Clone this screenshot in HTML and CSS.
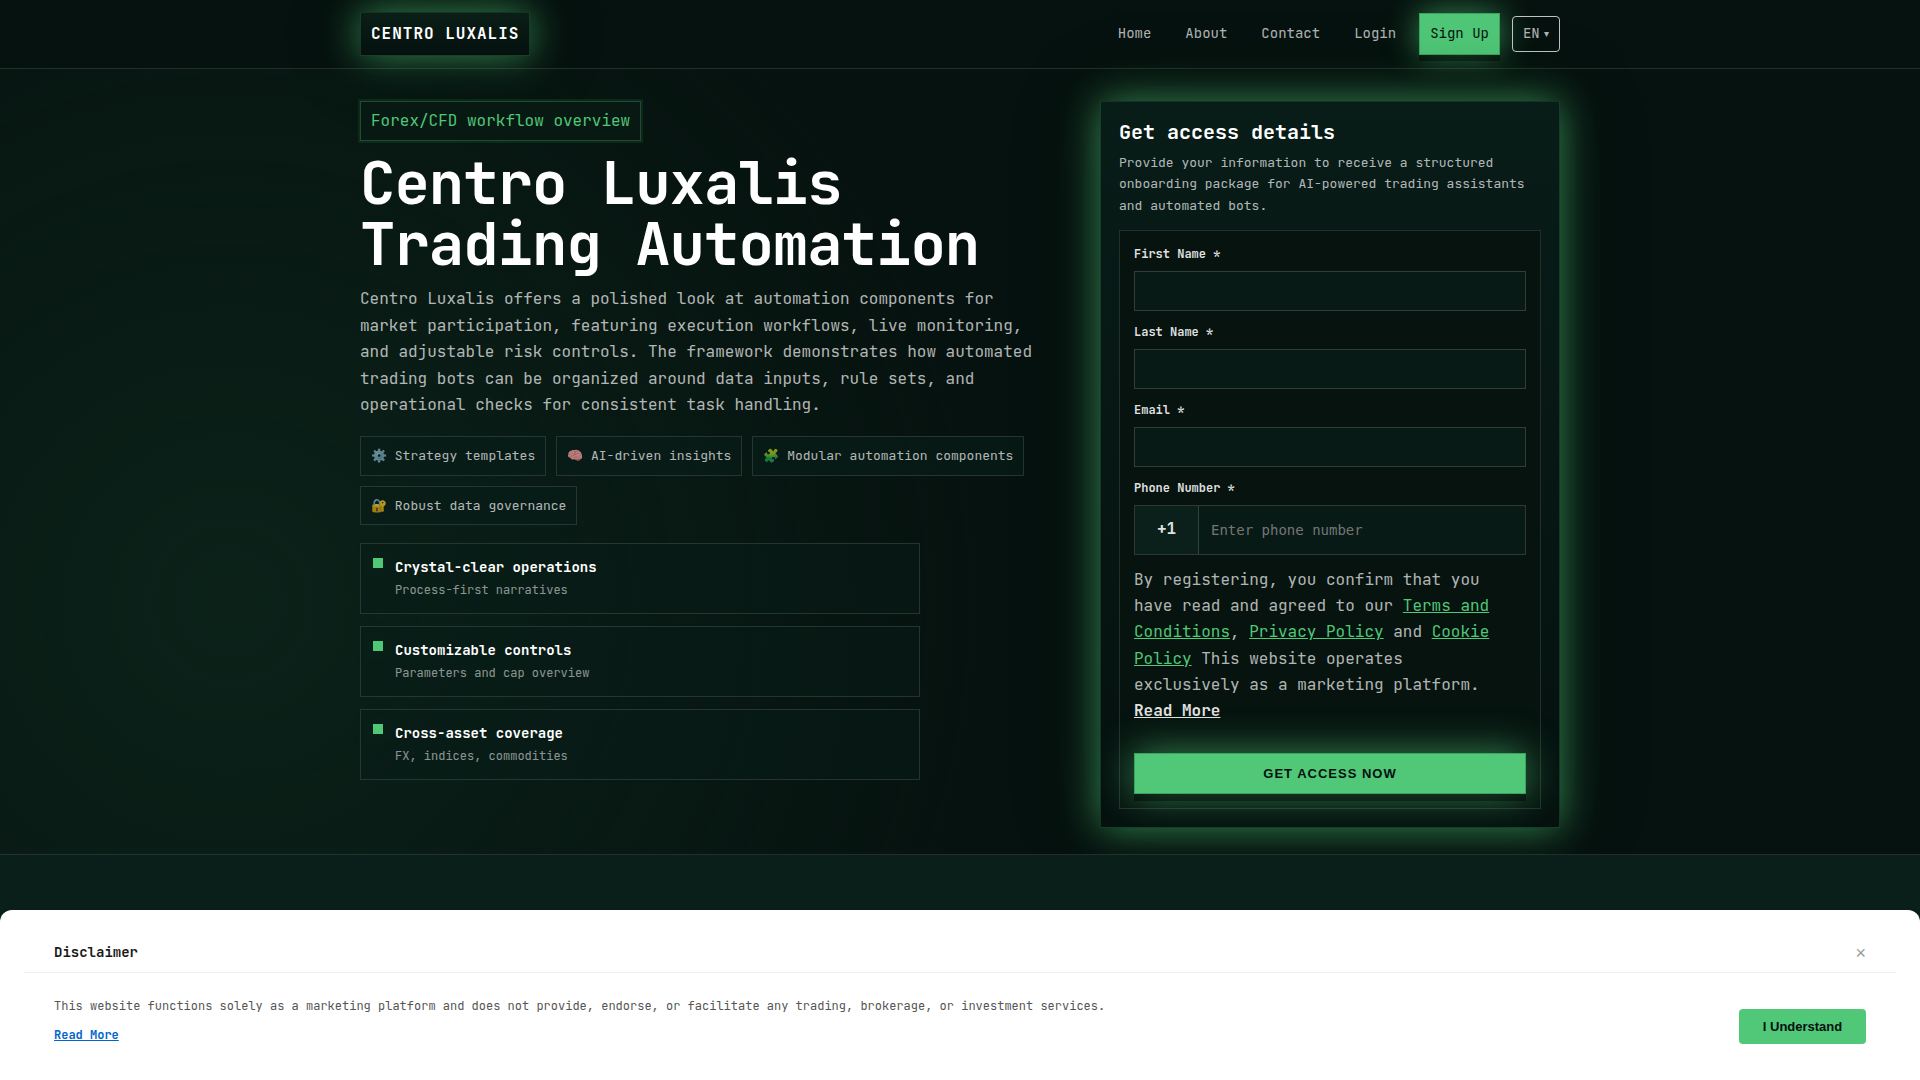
FILE: index.html
```
<!DOCTYPE html>
<html lang="en">
<head>
    <meta charset="UTF-8">
    <meta name="viewport" content="width=device-width, initial-scale=1.0">
    <title>Centro Luxalis</title>
    <link rel="stylesheet" href="styles.css">
</head>
<body>
    <header class="header">
        <div class="container header-inner">
            <a class="logo" href="#">CENTRO LUXALIS</a>
            <nav class="nav">
                <a href="#">Home</a>
                <a href="#about">About</a>
                <a href="#contact">Contact</a>
                <a href="#login">Login</a>
                <a class="nav-cta" href="#signup">Sign Up</a>
                <div class="lang">
                    <select aria-label="Language"><option>EN</option></select>
                    <span class="lang-arrow">▾</span>
                </div>
            </nav>
        </div>
    </header>

    <main>
        <section class="hero">
            <div class="container hero-grid">
                <div class="hero-copy">
                    <span class="badge">Forex/CFD workflow overview</span>
                    <h1>Centro Luxalis Trading Automation</h1>
                    <p class="lead">Centro Luxalis offers a polished look at automation components for market participation, featuring execution workflows, live monitoring, and adjustable risk controls. The framework demonstrates how automated trading bots can be organized around data inputs, rule sets, and operational checks for consistent task handling.</p>

                    <div class="chips">
                        <span class="chip">⚙️ Strategy templates</span>
                        <span class="chip">🧠 AI-driven insights</span>
                        <span class="chip">🧩 Modular automation components</span>
                        <span class="chip">🔐 Robust data governance</span>
                    </div>

                    <ul class="features">
                        <li class="feature">
                            <span class="dot"></span>
                            <div>
                                <strong>Crystal-clear operations</strong>
                                <small>Process-first narratives</small>
                            </div>
                        </li>
                        <li class="feature">
                            <span class="dot"></span>
                            <div>
                                <strong>Customizable controls</strong>
                                <small>Parameters and cap overview</small>
                            </div>
                        </li>
                        <li class="feature">
                            <span class="dot"></span>
                            <div>
                                <strong>Cross-asset coverage</strong>
                                <small>FX, indices, commodities</small>
                            </div>
                        </li>
                    </ul>
                </div>

                <!-- Registration panel -->
                <aside class="panel" id="signup">
                    <h2>Get access details</h2>
                    <p class="panel-text">Provide your information to receive a structured onboarding package for AI-powered trading assistants and automated bots.</p>
                    <form class="form">
                        <div class="field">
                            <label for="firstName">First Name *</label>
                            <input type="text" id="firstName">
                        </div>
                        <div class="field">
                            <label for="lastName">Last Name *</label>
                            <input type="text" id="lastName">
                        </div>
                        <div class="field">
                            <label for="email">Email *</label>
                            <input type="email" id="email">
                        </div>
                        <div class="field">
                            <label for="phone">Phone Number *</label>
                            <div class="phone">
                                <span class="phone-code">+1</span>
                                <input type="tel" id="phone" placeholder="Enter phone number">
                            </div>
                        </div>
                        <p class="consent">By registering, you confirm that you have read and agreed to our <a href="#terms">Terms and Conditions</a>, <a href="#privacy">Privacy Policy</a> and <a href="#cookies">Cookie Policy</a> This website operates exclusively as a marketing platform. <a class="more" href="#more">Read More</a></p>
                        <button class="submit" type="button">GET ACCESS NOW</button>
                    </form>
                </aside>
            </div>
        </section>

        <section class="next-section" id="about"></section>
    </main>

    <!-- Disclaimer bar -->
    <div class="disclaimer">
        <div class="disclaimer-head">
            <h3>Disclaimer</h3>
            <button class="close" type="button" aria-label="Close">×</button>
        </div>
        <div class="disclaimer-body">
            <div class="disclaimer-text">
                <p>This website functions solely as a marketing platform and does not provide, endorse, or facilitate any trading, brokerage, or investment services.</p>
                <a href="#more">Read More</a>
            </div>
            <button class="accept" type="button">I Understand</button>
        </div>
    </div>
</body>
</html>
```
FILE: styles.css
```
:root {
    --green: #50c878;
    --bg: #06120f;
    --line: rgba(255, 255, 255, 0.12);
    --muted: rgba(255, 255, 255, 0.7);
    --glow: 0 0 38px rgba(80, 200, 120, 0.65), 0 0 80px rgba(0, 20, 10, 0.3);
}
* {
    box-sizing: border-box;
}
body {
    display: flex;
    flex-direction: column;
    min-height: 100vh;
    margin: 0;
    background: var(--bg);
    color: var(--muted);
    font-family: "JetBrains Mono", "DejaVu Sans Mono", monospace;
    font-size: 16px;
    line-height: 1.65;
}
main {
    display: flex;
    flex: 1;
    flex-direction: column;
}
h1, h2, h3, p, ul {
    margin: 0;
    padding: 0;
}
.container {
    max-width: 1200px;
    margin: 0 auto;
}

/* Header */
.header {
    border-bottom: 1px solid var(--line);
}
.header-inner {
    display: flex;
    align-items: center;
    justify-content: space-between;
    height: 68px;
}
.logo {
    padding: 8px 10px;
    border: 1px solid rgba(80, 200, 120, 0.2);
    background: linear-gradient(180deg, #0a1e16, #05110f);
    box-shadow: var(--glow);
    color: #fff;
    font-weight: 700;
    letter-spacing: 1px;
    text-decoration: none;
}
.nav {
    display: flex;
    align-items: center;
    gap: 12px;
    font-size: 14px;
}
.nav a {
    padding: 8px 10px;
    border: 1px solid transparent;
    color: var(--muted);
    text-decoration: none;
}
.nav .nav-cta {
    border-color: #3ea262;
    background: var(--green);
    box-shadow: 0 6px 0 rgba(0, 0, 0, 0.4), 0 0 32px rgba(80, 200, 120, 0.65);
    color: #05110f;
}
.lang {
    display: flex;
    align-items: center;
    gap: 4px;
    height: 36px;
    padding: 0 10px;
    border: 1px solid rgba(255, 255, 255, 0.75);
    border-radius: 4px;
}
.lang select {
    padding: 0;
    border: 0;
    appearance: none;
    background: transparent;
    color: inherit;
    font: inherit;
}
.lang-arrow {
    font-family: "DejaVu Sans", sans-serif;
    font-size: 10px;
}

/* Hero */
.hero {
    padding: 32px 0 26px;
    border-bottom: 1px solid var(--line);
    background: radial-gradient(circle at 12% 68%, #0b2219 0, rgba(5, 17, 15, 0) 760px);
}
.hero-grid {
    display: grid;
    grid-template-columns: minmax(0, 1fr) 460px;
    gap: 40px;
    align-items: start;
}
.badge {
    display: inline-block;
    padding: 6px 10px;
    border: 1px solid rgba(80, 200, 120, 0.3);
    background: #081914;
    box-shadow: 0 0 0 2px rgba(80, 200, 120, 0.1);
    color: var(--green);
}
h1 {
    margin: 12px 0 11px;
    color: #fff;
    font-size: 59px;
    line-height: 61px;
    letter-spacing: -1px;
}
.chips {
    display: flex;
    flex-wrap: wrap;
    gap: 10px;
    margin: 18px 0;
}
.chip {
    padding: 8px 10px;
    border: 1px solid var(--line);
    background: rgba(8, 28, 24, 0.7);
    font-size: 13px;
}
.features {
    display: grid;
    gap: 12px;
    max-width: 560px;
    list-style: none;
}
.feature {
    display: flex;
    gap: 12px;
    padding: 12px;
    border: 1px solid var(--line);
    background: rgba(8, 28, 24, 0.5);
}
.dot {
    width: 10px;
    height: 10px;
    margin-top: 2px;
    background: var(--green);
    box-shadow: 0 0 30px rgba(80, 200, 120, 0.2);
}
.feature strong {
    display: block;
    color: #fff;
    font-size: 14px;
}
.feature small {
    display: block;
    margin-top: 2px;
    color: rgba(255, 255, 255, 0.55);
    font-size: 12px;
}

/* Panel */
.panel {
    padding: 18px;
    border: 1px solid rgba(80, 200, 120, 0.2);
    background: linear-gradient(180deg, #081c18, #05110f);
    box-shadow: var(--glow);
}
.panel h2 {
    color: #fff;
    font-size: 20px;
    line-height: 24px;
}
.panel-text {
    margin: 8px 0 14px;
    font-size: 13px;
}
.form {
    padding: 14px;
    border: 1px solid var(--line);
    background: #06130f;
}
.field {
    margin-bottom: 12px;
}
.field label {
    display: block;
    margin-bottom: 6px;
    color: rgba(255, 255, 255, 0.88);
    font-size: 12px;
    font-weight: 700;
}
.field input {
    width: 100%;
    height: 40px;
    padding: 0 12px;
    border: 1px solid rgba(255, 255, 255, 0.16);
    background: #081a16;
    color: #fff;
    font-family: "DejaVu Sans Mono", monospace;
    font-size: 14px;
}
.field input::placeholder {
    color: #757575;
}
.phone {
    display: flex;
    height: 50px;
    border: 1px solid rgba(255, 255, 255, 0.16);
}
.phone-code {
    display: flex;
    align-items: center;
    justify-content: center;
    width: 64px;
    border-right: 1px solid rgba(255, 255, 255, 0.16);
    background: #0b201a;
    color: rgba(255, 255, 255, 0.88);
    font-weight: 700;
}
.phone input {
    flex: 1;
    width: auto;
    height: auto;
    border: 0;
}
.consent {
    padding-right: 10px;
}
.consent a {
    color: var(--green);
}
.consent .more {
    color: rgba(255, 255, 255, 0.88);
    font-weight: 700;
}
.submit {
    width: 100%;
    height: 41px;
    margin-top: 28px;
    border: 1px solid #3ea262;
    background: var(--green);
    box-shadow: 0 7px 0 rgba(0, 0, 0, 0.4), 0 0 38px rgba(80, 200, 120, 0.65);
    color: #05110f;
    font-family: "Liberation Sans", sans-serif;
    font-size: 13px;
    font-weight: 700;
    letter-spacing: 1px;
}
.next-section {
    flex: 1;
    min-height: 200px;
    background: #0a1f1a;
}

/* Disclaimer */
.disclaimer {
    position: fixed;
    right: 0;
    bottom: 0;
    left: 0;
    height: 170px;
    padding: 24px 24px 0;
    border-radius: 12px 12px 0 0;
    background: #fff;
}
.disclaimer-head {
    display: flex;
    align-items: center;
    justify-content: space-between;
    height: 39px;
    padding: 0 30px;
    border-bottom: 1px solid #eee;
}
.disclaimer-head h3 {
    color: #1a1a1a;
    font-size: 14px;
}
.close {
    padding: 0;
    border: 0;
    background: none;
    color: #999;
    font-family: "Liberation Sans", sans-serif;
    font-size: 18px;
}
.disclaimer-body {
    display: flex;
    align-items: flex-end;
    justify-content: space-between;
    padding: 24px 30px 0;
    font-size: 12px;
}
.disclaimer-text p {
    margin-bottom: 9px;
    color: #555;
}
.disclaimer-text a {
    color: #0066cc;
    font-weight: 700;
}
.accept {
    width: 127px;
    height: 35px;
    margin-bottom: 2px;
    border: 0;
    border-radius: 4px;
    background: var(--green);
    color: #05110f;
    font-family: "Liberation Sans", sans-serif;
    font-size: 13px;
    font-weight: 700;
}
```
